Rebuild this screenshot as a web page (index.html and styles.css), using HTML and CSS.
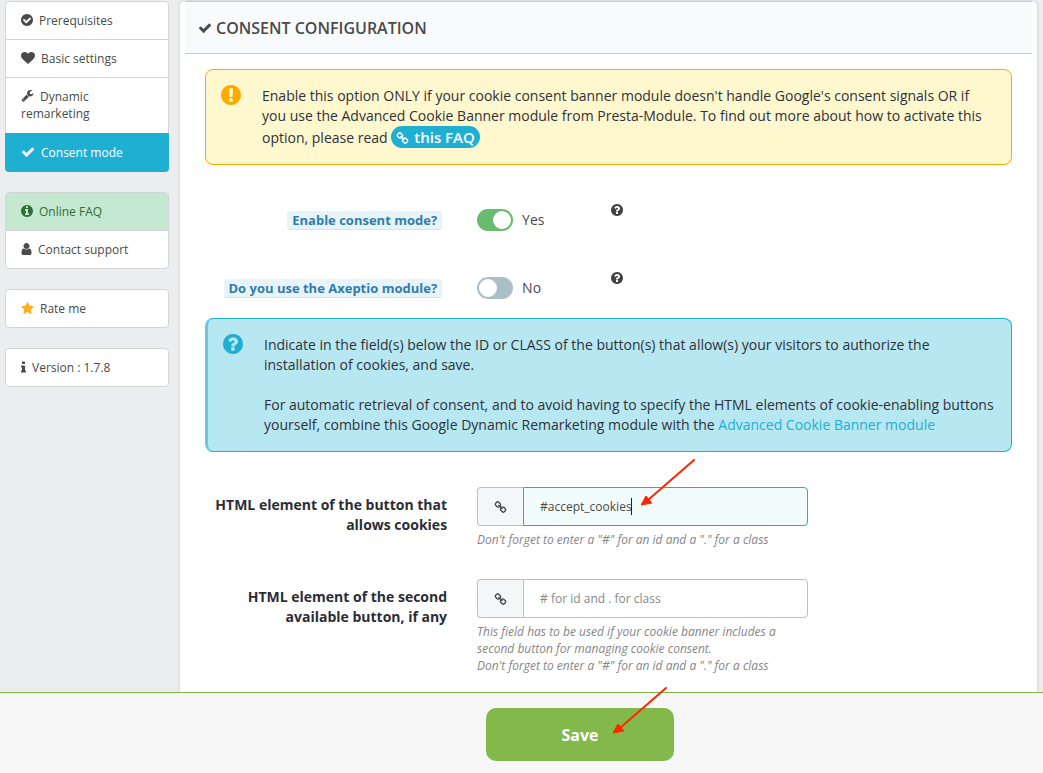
FILE: index.html
```html
<!DOCTYPE html>
<html lang="en">
<head>
<meta charset="utf-8">
<meta name="viewport" content="width=device-width, initial-scale=1">
<title>Consent configuration</title>
<link rel="stylesheet" href="styles.css">
</head>
<body>
<svg class="sprite" aria-hidden="true">
  <symbol id="check-circle" viewBox="128 128 1536 1536"><path d="M1412 734q0-28-18-46l-91-90q-19-19-45-19t-45 19l-408 407-226-226q-19-19-45-19t-45 19l-91 90q-18 18-18 46 0 27 18 45l362 362q19 19 45 19 27 0 46-19l543-543q18-18 18-45zm252 162q0 209-103 385.500t-279.500 279.500-385.500 103-385.500-103-279.500-279.500-103-385.500 103-385.500 279.500-279.500 385.500-103 385.500 103 279.500 279.500 103 385.500z"/></symbol>
  <symbol id="heart" viewBox="0 128 1792 1536"><path d="M896 1664q-26 0-44-18l-624-602q-10-8-27.500-26t-55.500-65.500-68-97.500-53.500-121-23.500-138q0-220 127-344t351-124q62 0 126.500 21.500t120 58 95.500 68.500 76 68q36-36 76-68t95.500-68.500 120-58 126.500-21.500q224 0 351 124t127 344q0 221-229 450l-623 600q-18 18-44 18z"/></symbol>
  <symbol id="wrench" viewBox="64 128 1664 1664"><path d="M448 1472q0-26-19-45t-45-19-45 19-19 45 19 45 45 19 45-19 19-45zm644-420l-682 682q-37 37-90 37-52 0-91-37l-106-108q-38-36-38-90 0-53 38-91l681-681q39 98 114.500 173.500t173.500 114.500zm634-435q0 39-23 106-47 134-164.500 217.500t-258.500 83.500q-185 0-316.500-131.500t-131.500-316.500 131.500-316.500 316.500-131.500q58 0 121.500 16.500t107.500 46.500q16 11 16 28t-16 28l-293 169v224l193 107q5-3 79-48.500t135.500-81 70.500-35.500q15 0 23.500 10t8.500 25z"/></symbol>
  <symbol id="check" viewBox="64 128 1664 1536"><path d="M1671 566q0 40-28 68l-724 724-136 136q-28 28-68 28t-68-28l-136-136-362-362q-28-28-28-68t28-68l136-136q28-28 68-28t68 28l294 295 656-657q28-28 68-28t68 28l136 136q28 28 28 68z"/></symbol>
  <symbol id="info-circle" viewBox="128 128 1536 1536"><path d="M1152 1376v-160q0-14-9-23t-23-9h-96v-512q0-14-9-23t-23-9h-320q-14 0-23 9t-9 23v160q0 14 9 23t23 9h96v320h-96q-14 0-23 9t-9 23v160q0 14 9 23t23 9h448q14 0 23-9t9-23zm-128-896v-160q0-14-9-23t-23-9h-192q-14 0-23 9t-9 23v160q0 14 9 23t23 9h192q14 0 23-9t9-23zm640 416q0 209-103 385.500t-279.500 279.500-385.500 103-385.500-103-279.500-279.500-103-385.500 103-385.500 279.500-279.500 385.500-103 385.500 103 279.500 279.500 103 385.500z"/></symbol>
  <symbol id="user" viewBox="256 128 1280 1536"><path d="M1536 1399q0 109-62.500 187t-150.500 78h-854q-88 0-150.500-78t-62.500-187q0-85 8.500-160.500t31.500-152 58.500-131 94-89 134.500-34.500q131 128 313 128t313-128q76 0 134.500 34.500t94 89 58.500 131 31.500 152 8.500 160.500zm-256-887q0 159-112.500 271.500t-271.500 112.500-271.500-112.500-112.500-271.500 112.500-271.500 271.500-112.500 271.500 112.500 112.500 271.500z"/></symbol>
  <symbol id="star" viewBox="64 32 1664 1587"><path d="M1728 647q0 22-26 48l-363 354 86 500q1 7 1 20 0 21-10.500 35.500t-30.500 14.500q-19 0-40-12l-449-236-449 236q-22 12-40 12-21 0-31.500-14.500t-10.500-35.500q0-6 2-20l86-500-364-354q-25-27-25-48 0-37 56-46l502-73 225-455q19-41 49-41t49 41l225 455 502 73q56 9 56 46z"/></symbol>
  <symbol id="info" viewBox="576 128 640 1408"><path d="M1216 1344v128q0 26-19 45t-45 19h-512q-26 0-45-19t-19-45v-128q0-26 19-45t45-19h64v-384h-64q-26 0-45-19t-19-45v-128q0-26 19-45t45-19h384q26 0 45 19t19 45v576h64q26 0 45 19t19 45zm-128-1152v192q0 26-19 45t-45 19h-256q-26 0-45-19t-19-45v-192q0-26 19-45t45-19h256q26 0 45 19t19 45z"/></symbol>
  <symbol id="exclamation" viewBox="128 128 1536 1536"><path d="M896 128q209 0 385.500 103t279.500 279.500 103 385.500-103 385.500-279.500 279.500-385.500 103-385.500-103-279.500-279.500-103-385.500 103-385.500 279.500-279.500 385.500-103zm128 1247v-190q0-14-9-23.500t-22-9.500h-192q-13 0-23 10t-10 23v190q0 13 10 23t23 10h192q13 0 22-9.500t9-23.500zm-2-344l18-621q0-12-10-18-10-8-24-8h-220q-14 0-24 8-10 6-10 18l17 621q0 10 10 17.500t24 7.500h185q14 0 23.500-7.500t10.500-17.500z"/></symbol>
  <symbol id="question" viewBox="128 128 1536 1536"><path d="M1024 1376v-192q0-14-9-23t-23-9h-192q-14 0-23 9t-9 23v192q0 14 9 23t23 9h192q14 0 23-9t9-23zm256-672q0-88-55.500-163t-138.500-116-170-41q-243 0-371 213-15 24 8 42l132 100q7 6 19 6 16 0 25-12 53-68 86-92 34-24 86-24 48 0 85.500 26t37.500 59q0 38-20 61t-68 45q-63 28-115.500 86.500t-52.500 125.500v36q0 14 9 23t23 9h192q14 0 23-9t9-23q0-19 21.500-49.500t54.500-49.500q32-18 49-28.500t46-35 44.500-48 28-60.500 12.500-81zm384 192q0 209-103 385.500t-279.500 279.500-385.500 103-385.500-103-279.500-279.500-103-385.500 103-385.500 279.500-279.500 385.500-103 385.500 103 279.500 279.500 103 385.500z"/></symbol>
  <symbol id="link" viewBox="64 0 1664 1664"><path d="M1520 1216q0-40-28-68l-208-208q-28-28-68-28-42 0-72 32 3 3 19 18.500t21.500 21.500 15 19 13 25.500 3.500 27.500q0 40-28 68t-68 28q-15 0-27.500-3.500t-25.500-13-19-15-21.500-21.500-18.500-19q-33 31-33 73 0 40 28 68l206 207q27 27 68 27 40 0 68-26l147-146q28-28 28-67zm-703-705q0-40-28-68l-206-207q-28-28-68-28-39 0-68 27l-147 146q-28 28-28 67 0 40 28 68l208 208q27 27 68 27 42 0 72-31-3-3-19-18.500t-21.500-21.500-15-19-13-25.500-3.500-27.500q0-40 28-68t68-28q15 0 27.500 3.500t25.500 13 19 15 21.500 21.500 18.500 19q33-31 33-73zm895 705q0 120-85 203l-147 146q-83 83-203 83-121 0-204-85l-206-207q-83-83-83-203 0-123 88-209l-88-88q-86 88-208 88-120 0-204-84l-208-208q-84-84-84-204t85-203l147-146q83-83 203-83 121 0 204 85l206 207q83 83 83 203 0 123-88 209l88 88q86-88 208-88 120 0 204 84l208 208q84 84 84 204z"/></symbol>
  <symbol id="arrow" viewBox="0 0 56 48"><path d="M53 1 7 41" stroke="#ff2600" stroke-width="2" stroke-linecap="round"/><path d="M0 46 5 37 11 44z" fill="#ff2600" stroke="#ff2600" stroke-linejoin="round"/></symbol>
</svg>

<div class="page">
  <div class="content">
    <nav class="sidebar" aria-label="Module">
      <div class="menu">
        <a class="menu-item" href="#"><svg class="icon w12"><use href="#check-circle"/></svg>Prerequisites</a>
        <a class="menu-item" href="#"><svg class="icon w14"><use href="#heart"/></svg>Basic settings</a>
        <a class="menu-item" href="#"><svg class="icon w13"><use href="#wrench"/></svg>Dynamic remarketing</a>
        <a class="menu-item active" href="#" aria-current="page"><svg class="icon w14"><use href="#check"/></svg>Consent mode</a>
      </div>
      <div class="menu">
        <a class="menu-item faq" href="#"><svg class="icon w12"><use href="#info-circle"/></svg>Online FAQ</a>
        <a class="menu-item" href="#"><svg class="icon w11"><use href="#user"/></svg>Contact support</a>
      </div>
      <div class="menu">
        <a class="menu-item" href="#"><svg class="icon w13 star"><use href="#star"/></svg>Rate me</a>
      </div>
      <div class="menu">
        <div class="menu-item"><svg class="icon w4"><use href="#info"/></svg>Version : 1.7.8</div>
      </div>
    </nav>

    <main class="panel">
      <h1 class="panel-title"><svg class="icon w14"><use href="#check"/></svg>CONSENT CONFIGURATION</h1>
      <form class="form" id="consent">
        <div class="alert warning">
          <svg class="alert-icon"><use href="#exclamation"/></svg>
          <p>Enable this option ONLY if your cookie consent banner module doesn't handle Google's consent signals OR if you use the Advanced Cookie Banner module from Presta-Module. To find out more about how to activate this option, please read <a class="pill" href="#"><svg class="icon w13"><use href="#link"/></svg>this FAQ</a></p>
        </div>

        <div class="switches">
          <div class="row switch-row">
            <label class="tag" for="enable">Enable consent mode?</label>
            <div class="switch-cell"><input class="switch" type="checkbox" id="enable" checked><span class="state">Yes</span><svg class="help-icon"><use href="#question"/></svg></div>
          </div>
          <div class="row switch-row">
            <label class="tag" for="axeptio">Do you use the Axeptio module?</label>
            <div class="switch-cell"><input class="switch" type="checkbox" id="axeptio"><span class="state">No</span><svg class="help-icon"><use href="#question"/></svg></div>
          </div>
        </div>

        <div class="alert info">
          <svg class="alert-icon"><use href="#question"/></svg>
          <div>
            <p>Indicate in the field(s) below the ID or CLASS of the button(s) that allow(s) your visitors to authorize the installation of cookies, and save.</p>
            <p>For automatic retrieval of consent, and to avoid having to specify the HTML elements of cookie-enabling buttons yourself, combine this Google Dynamic Remarketing module with the <a class="text-link" href="#">Advanced Cookie Banner module</a></p>
          </div>
        </div>

        <div class="fields">
          <div class="row">
            <label class="field-label" for="first">HTML element of the button that allows cookies</label>
            <div>
              <div class="input-group">
                <span class="addon"><svg class="icon w13"><use href="#link"/></svg></span>
                <input class="text-input focused" id="first" type="text" value="#accept_cookies">
                <span class="caret"></span>
                <svg class="arrow arrow-input" aria-hidden="true"><use href="#arrow"/></svg>
              </div>
              <p class="hint">Don't forget to enter a "#" for an id and a "." for a class</p>
            </div>
          </div>
          <div class="row">
            <label class="field-label" for="second">HTML element of the second available button, if any</label>
            <div>
              <div class="input-group">
                <span class="addon"><svg class="icon w13"><use href="#link"/></svg></span>
                <input class="text-input" id="second" type="text" placeholder="# for id and . for class">
              </div>
              <p class="hint">This field has to be used if your cookie banner includes a second button for managing cookie consent.<br>Don't forget to enter a "#" for an id and a "." for a class</p>
            </div>
          </div>
        </div>
      </form>
    </main>
  </div>

  <footer class="footer">
    <div class="save-wrap">
      <button class="save" type="submit" form="consent">Save</button>
      <svg class="arrow arrow-save" aria-hidden="true"><use href="#arrow"/></svg>
    </div>
  </footer>
</div>
</body>
</html>
```
FILE: styles.css
```css
* {
  box-sizing: border-box;
}

body {
  margin: 0;
  background: #ecedef;
  color: #4a4a4a;
  font: 14px/20px "Open Sans", "Noto Sans", sans-serif;
}

p,
h1 {
  margin: 0;
}

a {
  text-decoration: none;
}

.sprite {
  position: absolute;
  width: 0;
  height: 0;
}

.icon {
  height: 12px;
  fill: currentColor;
  vertical-align: -1px;
}

.w4 { width: 5px; }
.w11 { width: 11px; }
.w12 { width: 12px; }
.w13 { width: 13px; }
.w14 { width: 14px; }

.page {
  display: flex;
  flex-direction: column;
  height: 100vh;
}

.content {
  flex: 1;
  display: flex;
  align-items: stretch;
  gap: 11px;
  min-height: 0;
  padding: 1px 6px 0 5px;
  overflow: hidden;
}

/* Sidebar */
.sidebar {
  flex: 0 0 164px;
  display: flex;
  flex-direction: column;
  gap: 20px;
}

.menu {
  border: 1px solid #d3d5d7;
  border-radius: 4px;
  background: #fff;
}

.menu-item {
  display: block;
  padding: 10px 15px;
  color: #4a4a4a;
  font-size: 12px;
  line-height: 17px;
}

.menu-item + .menu-item {
  border-top: 1px solid #d3d5d7;
}

.menu-item .icon {
  margin-right: 6px;
}

.menu .menu-item.active {
  margin: 1px -1px -1px;
  padding: 11px 16px;
  border: 0;
  border-radius: 0 0 4px 4px;
  background: #1fafd3;
  color: #fff;
}

.menu-item.faq {
  border-radius: 3px 3px 0 0;
  background: #c5e8d1;
  color: #2f6f33;
}

.star {
  color: #fbb01f;
}

/* Panel */
.panel {
  flex: 1;
  min-width: 0;
  height: max-content;
  min-height: 100%;
  padding: 0 5px 30px;
  border-radius: 5px;
  background: #fff;
  box-shadow: 0 0 3px 1px #d3d8db;
}

.panel-title {
  display: flex;
  align-items: center;
  gap: 4px;
  height: 53px;
  padding: 0 13px;
  border: solid #c9cccf;
  border-width: 1px 0;
  background: #f9fafc;
  color: #4a4a4a;
  font-size: 16px;
  font-weight: 600;
}

.form {
  padding: 15px 20px 0;
}

.alert {
  display: flex;
  gap: 21px;
  padding: 16px 15px;
  border: 1px solid;
  border-radius: 8px;
  color: #2f3138;
}

.alert-icon {
  flex: 0 0 20px;
  height: 20px;
  margin-top: -1px;
  fill: currentColor;
}

.alert.warning {
  border-color: #fbaa00;
  background: #fff8cf;
}

.warning .alert-icon {
  color: #fbaa00;
}

.alert.info {
  border-color: #1fafd3;
  border-left: 3px solid #6cc8de;
  background: #b7e7f0;
}

.info .alert-icon {
  color: #1fafd3;
}

.info p + p {
  margin-top: 20px;
}

.text-link {
  color: #1fafd3;
}

.pill {
  display: inline-block;
  padding: 0 5px;
  border-radius: 11px;
  background: #1fafd3;
  color: #fff;
  font-size: 15px;
  font-weight: 600;
  line-height: 22px;
}

.pill .icon {
  margin-right: 5px;
}

.row {
  display: grid;
  grid-template-columns: 30% 41%;
  column-gap: 30px;
}

/* Switches */
.switches {
  display: grid;
  gap: 36px;
  padding: 39px 0 14px;
}

.switch-row {
  align-items: center;
}

.tag {
  justify-self: end;
  margin-right: 5px;
  padding: 0 5px;
  border-bottom: 1px solid #cfe6f0;
  border-radius: 3px;
  background: #e8f4fa;
  color: #2f7dab;
  font-size: 13px;
  font-weight: 700;
  line-height: 18px;
}

.switch-cell {
  display: flex;
  align-items: center;
  height: 32px;
}

.switch {
  appearance: none;
  display: flex;
  width: 36px;
  height: 22px;
  margin: 0;
  padding: 2px;
  border-radius: 11px;
  background: #aabfc7;
}

.switch::before {
  content: "";
  width: 18px;
  height: 18px;
  border-radius: 50%;
  background: #fff;
}

.switch:checked {
  justify-content: flex-end;
  background: #69bb6e;
}

.state {
  width: 98px;
  padding-left: 9px;
}

.help-icon {
  align-self: flex-start;
  width: 12px;
  height: 12px;
  fill: #424242;
}

/* Fields */
.fields {
  display: grid;
  gap: 31px;
  padding-top: 35px;
}

.field-label {
  padding-top: 8px;
  color: #2b2d35;
  font-weight: 700;
  text-align: right;
}

.input-group {
  position: relative;
  display: flex;
  height: 39px;
}

.addon {
  flex: 0 0 46px;
  display: grid;
  place-items: center;
  border: 1px solid #afc5cb;
  border-right: 0;
  border-radius: 4px 0 0 4px;
  background: #f4f7f8;
}

.text-input {
  flex: 1;
  min-width: 0;
  padding: 0 16px;
  border: 1px solid #afc5cb;
  border-radius: 0 4px 4px 0;
  background: #fff;
  color: #4a4a4a;
  font: 12px/17px "Open Sans", "Noto Sans", sans-serif;
}

.text-input::placeholder {
  color: #888;
  opacity: 1;
}

.text-input.focused {
  border-color: #1fafd3;
  background: #f3fcfd;
}

.caret {
  position: absolute;
  top: 11px;
  left: 154px;
  width: 1px;
  height: 17px;
  background: #222;
}

.hint {
  margin-top: 5px;
  color: #868686;
  font-size: 12px;
  font-style: italic;
  line-height: 17px;
}

/* Arrows over the controls */
.arrow {
  position: absolute;
  width: 56px;
  height: 48px;
  fill: none;
  pointer-events: none;
}

.arrow-input {
  top: -28px;
  left: 164px;
}

.arrow-save {
  top: -21px;
  left: 127px;
}

/* Footer */
.footer {
  display: flex;
  justify-content: center;
  padding: 15px 0 12px 117px;
  border-top: 1px solid #83b94b;
  background: #f7f7f7;
}

.save-wrap {
  position: relative;
}

.save {
  width: 188px;
  height: 53px;
  border: 0;
  border-radius: 10px;
  background: #83b94b;
  color: #fff;
  font: 700 16px/20px "Open Sans", "Noto Sans", sans-serif;
}
```
